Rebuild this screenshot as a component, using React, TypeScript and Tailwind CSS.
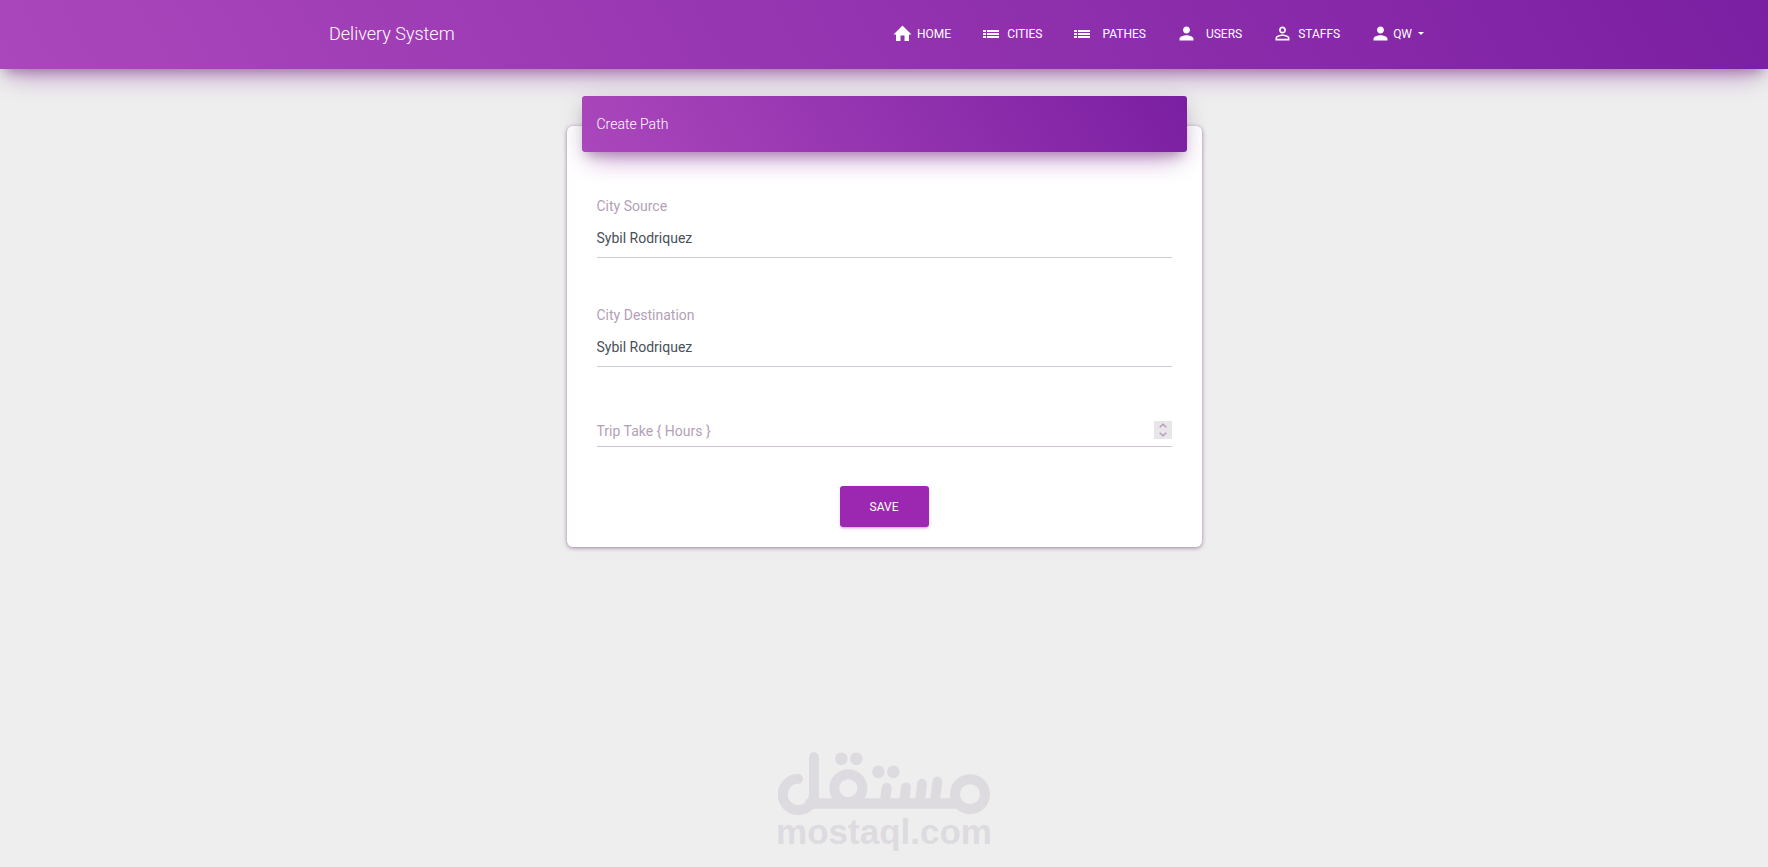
import clsx from "clsx";
import { MdPerson, MdPersonOutline } from "react-icons/md";

const HomeIcon = () => (
  <svg width="21" height="21" viewBox="0 0 21 21" fill="currentColor">
    <path d="M10.5 2.5 L19.5 11.5 H17 V18 H12.5 V12.5 H8.5 V18 H4 V11.5 H1.5 Z" />
  </svg>
);

const ListIcon = () => (
  <svg width="21" height="21" viewBox="0 0 21 21" fill="currentColor">
    <path d="M2 7h3v2H2zM2 10h3v2H2zM2 13h3v2H2zM6 7h12v2H6zM6 10h12v2H6zM6 13h12v2H6z" />
  </svg>
);

const UserIcon = () => <MdPerson size={21} />;

const StaffIcon = () => <MdPersonOutline size={21} />;

const navLinks = [
  { title: "Home", icon: HomeIcon, gap: "gap-1" },
  { title: "Cities", icon: ListIcon, gap: "gap-[5px]" },
  { title: "Pathes", icon: ListIcon, gap: "gap-[9px]" },
  { title: "Users", icon: UserIcon, gap: "gap-[9px]" },
  { title: "Staffs", icon: StaffIcon, gap: "gap-[5px]" },
];

const cities = ["Sybil Rodriquez"];

const Navbar = () => (
  <nav className="bg-[linear-gradient(60deg,#ab47bc,#7b1fa2)] text-white shadow-[0_16px_26px_-10px_rgba(156,39,176,0.4),0_4px_25px_0_rgba(0,0,0,0.12),0_8px_10px_-5px_rgba(80,20,90,0.3)]">
    <div className="mx-auto flex h-[69px] w-full max-w-[1140px] items-center justify-between px-[15px] pb-0.5">
      <a href="#" className="text-lg font-light">
        Delivery System
      </a>
      <ul className="flex items-center text-xs uppercase">
        {navLinks.map(({ title, icon: Icon, gap }) => (
          <li key={title}>
            <a href="#" className={clsx("flex items-center px-[15px]", gap)}>
              <Icon />
              {title}
            </a>
          </li>
        ))}
        <li>
          <button
            type="button"
            className="flex items-center gap-0.5 pl-[15px] uppercase"
          >
            <UserIcon />
            QW
            <span className="ml-1 mr-[15px] border-x-[3px] border-t-[3px] border-x-transparent border-t-white" />
          </button>
        </li>
      </ul>
    </div>
  </nav>
);

const CitySelect = ({ id, label }: { id: string; label: string }) => (
  <div className="flex flex-col">
    <label htmlFor={id} className="text-sm text-[#b39fb8]">
      {label}
    </label>
    <select
      id={id}
      className="h-[42px] w-full appearance-none border-b border-[#cfc9d3] bg-transparent pt-0.5 text-sm text-[#495057] outline-none"
    >
      {cities.map((city) => (
        <option key={city}>{city}</option>
      ))}
    </select>
  </div>
);

const HoursInput = () => (
  <div className="relative mt-[44px]">
    <input
      id="hours"
      type="number"
      className="block h-9 w-full appearance-none border-b border-[#cfc4d3] bg-transparent text-sm text-[#495057] outline-none [&::-webkit-inner-spin-button]:appearance-none"
    />
    <label
      htmlFor="hours"
      className="absolute left-0 top-2.5 text-sm text-[#b39fb8]"
    >
      Trip Take &#123; Hours &#125;
    </label>
    <div className="absolute right-0 top-2.5 flex w-[18px] flex-col bg-[#e8e6e9] text-[#b39fb8]">
      <button
        type="button"
        aria-label="Increase"
        className="flex h-[9px] items-center justify-center"
      >
        <svg width="8" height="5" viewBox="0 0 8 5" fill="none">
          <path d="M0.7 4.3 L4 1.2 L7.3 4.3" stroke="currentColor" strokeWidth="1.5" />
        </svg>
      </button>
      <button
        type="button"
        aria-label="Decrease"
        className="flex h-[9px] items-center justify-center"
      >
        <svg width="8" height="5" viewBox="0 0 8 5" fill="none">
          <path d="M0.7 0.7 L4 3.8 L7.3 0.7" stroke="currentColor" strokeWidth="1.5" />
        </svg>
      </button>
    </div>
  </div>
);

const PathForm = () => (
  <div className="mx-auto mt-[57px] w-full max-w-[635px] rounded-md bg-white shadow-[0_1px_4px_0_rgba(80,20,90,0.5)]">
    <div className="relative mx-[15px] -top-[30px] -mb-[30px] flex h-14 items-center rounded-[3px] bg-[linear-gradient(60deg,#ab47bc,#7b1fa2)] px-[15px] shadow-[0_16px_26px_-10px_rgba(156,39,176,0.4),0_4px_25px_0_rgba(0,0,0,0.12),0_8px_10px_-5px_rgba(80,20,90,0.3)]">
      <h4 className="text-sm font-light text-white">Create Path</h4>
    </div>
    <form
      className="px-[30px] pb-5 pt-[44px]"
      onSubmit={(e) => e.preventDefault()}
    >
      <div className="flex flex-col gap-[47px]">
        <CitySelect id="source" label="City Source" />
        <CitySelect id="destination" label="City Destination" />
      </div>
      <HoursInput />
      <button
        type="submit"
        className="mx-auto mt-[39px] block h-[41px] min-w-[89px] rounded-[3px] bg-[#9c27b0] text-xs uppercase text-white shadow-[0_2px_2px_0_rgba(156,39,176,0.14),0_3px_1px_-2px_rgba(156,39,176,0.2),0_1px_5px_0_rgba(156,39,176,0.12)]"
      >
        Save
      </button>
    </form>
  </div>
);

const Watermark = () => (
  <div className="mx-auto mt-auto flex flex-col items-center pb-[19px] text-[#dedbe0]">
    <svg
      width="212"
      height="63"
      viewBox="54 36 636 188"
      fill="none"
      stroke="currentColor"
      strokeWidth="30"
      strokeLinecap="round"
    >
      <path d="M114 116 A47 47 0 1 0 162 163 V51" />
      <path d="M150 190 H585" strokeWidth="32" />
      <circle cx="265" cy="144" r="42" />
      <path d="M380 143 L374 188 M438 142 L432 188 M486 131 L480 188 M532 124 L524 188" />
      <circle cx="630" cy="162" r="45" />
      <g fill="currentColor" stroke="none">
        <circle cx="244" cy="56" r="19" />
        <circle cx="289" cy="56" r="19" />
        <circle cx="355" cy="95" r="19" />
        <circle cx="400" cy="95" r="19" />
      </g>
    </svg>
    <p className="font-['Liberation_Sans',sans-serif] text-[35px] font-bold leading-[33px]">
      mostaql.com
    </p>
  </div>
);

const App = () => (
  <div className="flex min-h-screen flex-col bg-[#eee] font-[Roboto,sans-serif]">
    <Navbar />
    <PathForm />
    <Watermark />
  </div>
);

export default App;
